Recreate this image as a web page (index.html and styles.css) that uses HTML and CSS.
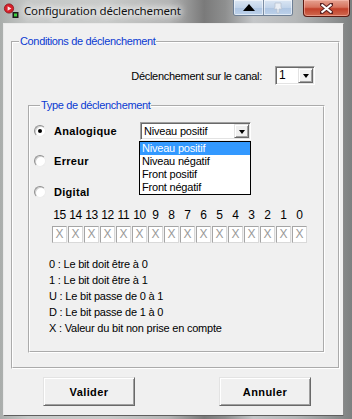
FILE: index.html
```html
<!DOCTYPE html>
<html lang="fr">
<head>
<meta charset="utf-8">
<title>Configuration déclenchement</title>
<link rel="stylesheet" href="styles.css">
</head>
<body>
<div class="window">
  <div class="titlebar">
    <svg class="appicon" width="16" height="16" viewBox="0 0 16 16">
      <circle cx="6" cy="5.5" r="4.6" fill="#d8202a" stroke="#8a1016" stroke-width="0.8"/>
      <path d="M4.6 3.2 L8.4 5.5 L4.6 7.8 Z" fill="#fbe6e6"/>
      <rect x="9.5" y="9" width="6" height="6" fill="#1a1a1a"/>
      <rect x="11" y="10.5" width="3" height="3" fill="#3fcf3f"/>
    </svg>
    <span class="title">Configuration déclenchement</span>
    <div class="capbtns">
      <div class="capbtn">
        <svg width="12" height="7" viewBox="0 0 12 7"><path d="M0 7 L6 0 L12 7 Z" fill="#000"/></svg>
      </div>
      <div class="capbtn">
        <svg width="10" height="12" viewBox="0 0 10 12"><path d="M2 1 H8 V5 L9 7 H6 V11 H4 V7 H1 L2 5 Z" fill="#e9eef5" stroke="#b7c3d2" stroke-width="0.8"/></svg>
      </div>
    </div>
    <div class="closebtn">
      <svg width="13" height="11" viewBox="0 0 13 11"><path d="M1 1 L12 10 M12 1 L1 10" stroke="#5a2020" stroke-width="4" stroke-linecap="square"/><path d="M1.5 1.5 L11.5 9.5 M11.5 1.5 L1.5 9.5" stroke="#fff" stroke-width="2.2"/></svg>
    </div>
  </div>

  <div class="client">
    <fieldset class="group outer">
      <legend>Conditions de déclenchement</legend>
      <div class="canal-row">
        <span class="txt">Déclenchement sur le canal:</span>
        <div class="combo combo-canal"><span class="val">1</span><span class="arrowbtn"><span class="tri"></span></span></div>
      </div>

      <fieldset class="group inner">
        <legend>Type de déclenchement</legend>
        <div class="opt opt-analog">
          <span class="radio checked"></span><span class="rlabel">Analogique</span>
          <div class="combo combo-type"><span class="val">Niveau positif</span><span class="arrowbtn"><span class="tri"></span></span></div>
          <ul class="droplist">
            <li class="sel">Niveau positif</li>
            <li>Niveau négatif</li>
            <li>Front positif</li>
            <li>Front négatif</li>
          </ul>
        </div>
        <div class="opt opt-err"><span class="radio"></span><span class="rlabel">Erreur</span></div>
        <div class="opt opt-dig"><span class="radio"></span><span class="rlabel">Digital</span></div>

        <div class="bitnums">
          <span>15</span><span>14</span><span>13</span><span>12</span><span>11</span><span>10</span><span>9</span><span>8</span><span>7</span><span>6</span><span>5</span><span>4</span><span>3</span><span>2</span><span>1</span><span>0</span>
        </div>
        <div class="bits">
          <span class="bit">X</span><span class="bit">X</span><span class="bit">X</span><span class="bit">X</span><span class="bit">X</span><span class="bit">X</span><span class="bit">X</span><span class="bit">X</span><span class="bit">X</span><span class="bit">X</span><span class="bit">X</span><span class="bit">X</span><span class="bit">X</span><span class="bit">X</span><span class="bit">X</span><span class="bit">X</span>
        </div>

        <div class="help">
          <div>0 : Le bit doit être à 0</div>
          <div>1 : Le bit doit être à 1</div>
          <div>U : Le bit passe de 0 à 1</div>
          <div>D : Le bit passe de 1 à 0</div>
          <div>X : Valeur du bit non prise en compte</div>
        </div>
      </fieldset>
    </fieldset>

    <div class="actions">
      <button class="btn">Valider</button>
      <button class="btn">Annuler</button>
    </div>
  </div>
</div>
</body>
</html>
```

FILE: styles.css
```css
* { box-sizing: border-box; }

html, body {
  margin: 0;
  padding: 0;
}

body {
  width: 352px;
  height: 419px;
  overflow: hidden;
  font-family: "Liberation Sans", Arial, sans-serif;
  font-size: 11px;
  color: #000;
}

.window {
  width: 352px;
  height: 419px;
  display: flex;
  flex-direction: column;
  background:
    linear-gradient(90deg, #a9adab 0%, #c6c8c7 8%, #c9cbca 30%, #b4b5b5 48%, #7a7a7a 58%, #8e8f8f 64%, #c4c6c8 72%, #b5b7b8 84%, #7d8080 100%);
}

/* ---------- title bar ---------- */
.titlebar {
  height: 23px;
  flex: none;
  display: flex;
  align-items: flex-start;
}

.appicon {
  margin: 3px 0 0 3px;
  flex: none;
}

.title {
  margin: 3px 0 0 5px;
  font-family: "Noto Sans", "Open Sans", sans-serif;
  font-size: 11.5px;
  line-height: 16px;
  color: #111;
  letter-spacing: -0.15px;
  text-shadow: 0 0 6px #fff, 0 0 8px #fff, 0 0 10px #fff;
}

.capbtns {
  margin-left: auto;
  display: flex;
  height: 16px;
  border: 1px solid #6d7f95;
  border-top: none;
  border-radius: 0 0 3px 3px;
  overflow: hidden;
}

.capbtn {
  width: 29px;
  height: 15px;
  display: flex;
  align-items: center;
  justify-content: center;
  background: linear-gradient(#dbe6f3, #c2d4ea 50%, #aec5e2 51%, #bcd1ea);
  box-shadow: inset 0 0 0 1px rgba(255,255,255,0.55);
}

.capbtn + .capbtn {
  border-left: 1px solid #7d8ea4;
}

.closebtn {
  margin: 0 2px 0 10px;
  width: 47px;
  height: 17px;
  display: flex;
  align-items: center;
  justify-content: center;
  border: 1px solid #5b1a12;
  border-top: none;
  border-radius: 0 0 4px 4px;
  background: linear-gradient(#e5a291, #d7735e 45%, #c2402a 55%, #cf6a50);
  box-shadow: inset 0 0 0 1px rgba(255,200,190,0.5);
}

/* ---------- client ---------- */
.client {
  margin: 0 8px 3px 3px;
  flex: 1;
  background: #f0f0f0;
  border: 1px solid;
  border-color: #e9e9e9 #8a8a8a #5f5f5f #e9e9e9;
  padding: 11px 0 0 7px;
}

.group {
  margin: 0;
  min-inline-size: 0;
  border: 2px groove #fff;
}

.group > legend {
  margin-left: 6px;
  padding: 0 1px;
  color: #0a3ad2;
  line-height: 13px;
  letter-spacing: -0.35px;
}

.outer {
  width: 329px;
  padding: 18px 0 14px 0;
}

.canal-row {
  display: flex;
  justify-content: flex-end;
  align-items: center;
  height: 19px;
  padding-right: 23px;
}

.txt {
  margin-right: 13px;
  letter-spacing: -0.3px;
}

/* ---------- combo boxes ---------- */
.combo {
  position: relative;
  height: 19px;
  background: #fff;
  border: 1px solid;
  border-color: #a0a0a0 #fff #fff #a0a0a0;
  box-shadow: inset 1px 1px 0 #696969, inset -1px -1px 0 #e3e3e3;
  display: flex;
  align-items: center;
  padding: 0 1px 0 3px;
}

.combo .val {
  flex: 1;
  line-height: 13px;
  letter-spacing: -0.2px;
}

.combo-canal {
  width: 40px;
  font-size: 12px;
}

.combo-type {
  width: 111px;
  height: 18px;
}

.arrowbtn {
  width: 15px;
  height: 15px;
  display: flex;
  align-items: center;
  justify-content: center;
  background: #f0f0f0;
  border: 1px solid;
  border-color: #e3e3e3 #696969 #696969 #e3e3e3;
  box-shadow: inset 1px 1px 0 #fff, inset -1px -1px 0 #a0a0a0;
}

.combo-type .arrowbtn {
  height: 14px;
}

.tri {
  width: 0;
  height: 0;
  border-left: 3.5px solid transparent;
  border-right: 3.5px solid transparent;
  border-top: 4px solid #000;
  margin-top: 1px;
}

/* ---------- inner group ---------- */
.inner {
  margin: 14px 0 0 15px;
  width: 297px;
  padding: 10px 0 15px 4px;
}

.opt {
  position: relative;
  height: 18px;
  display: flex;
  align-items: center;
}

.opt-err { margin-top: 12px; }
.opt-dig { margin-top: 13px; }

.radio {
  width: 12px;
  height: 12px;
  border-radius: 50%;
  border: 1px solid;
  border-color: #8f8f8f #ececec #ececec #8f8f8f;
  background: #fff;
  box-shadow: inset 1px 1px 0 #cfcfcf;
  display: flex;
  align-items: center;
  justify-content: center;
  flex: none;
}

.radio.checked::after {
  content: "";
  width: 4px;
  height: 4px;
  border-radius: 50%;
  background: #000;
}

.rlabel {
  margin-left: 8px;
  width: 86px;
  font-weight: bold;
  letter-spacing: 0.3px;
  line-height: 13px;
}

/* drop-down popup */
.droplist {
  position: absolute;
  left: 105px;
  top: 19px;
  width: 112px;
  margin: 0;
  padding: 0;
  list-style: none;
  background: #fff;
  border: 1px solid #000;
  z-index: 2;
}

.droplist li {
  height: 13px;
  line-height: 13px;
  padding-left: 2px;
  letter-spacing: -0.2px;
}

.droplist li.sel {
  background: #3399ff;
  color: #fff;
}

/* ---------- bits ---------- */
.bitnums,
.bits {
  display: flex;
  gap: 1px;
  padding-left: 18px;
}

.bitnums {
  margin-top: 8px;
  line-height: 13px;
}

.bitnums span {
  width: 15px;
  text-align: center;
  font-size: 12px;
  letter-spacing: -0.3px;
}

.bits {
  margin-top: 4px;
}

.bit {
  width: 15px;
  height: 17px;
  background: #fff;
  border: 1px solid;
  border-color: #a5a5a5 #d9d9d9 #d9d9d9 #a5a5a5;
  color: #9a9a9a;
  font-size: 12px;
  line-height: 15px;
  text-align: center;
}

.help {
  margin-top: 13px;
  padding-left: 15px;
  line-height: 16px;
  letter-spacing: -0.2px;
}

/* ---------- buttons ---------- */
.actions {
  display: flex;
  gap: 84px;
  margin-top: 8px;
  padding-left: 32px;
}

.btn {
  width: 92px;
  height: 29px;
  margin: 0;
  padding: 0;
  font-family: "Liberation Sans", Arial, sans-serif;
  font-size: 11px;
  font-weight: bold;
  letter-spacing: 0.4px;
  color: #000;
  background: #f0f0f0;
  border: 1px solid;
  border-color: #e3e3e3 #696969 #696969 #e3e3e3;
  box-shadow: inset 1px 1px 0 #fff, inset -1px -1px 0 #a0a0a0;
}
```
